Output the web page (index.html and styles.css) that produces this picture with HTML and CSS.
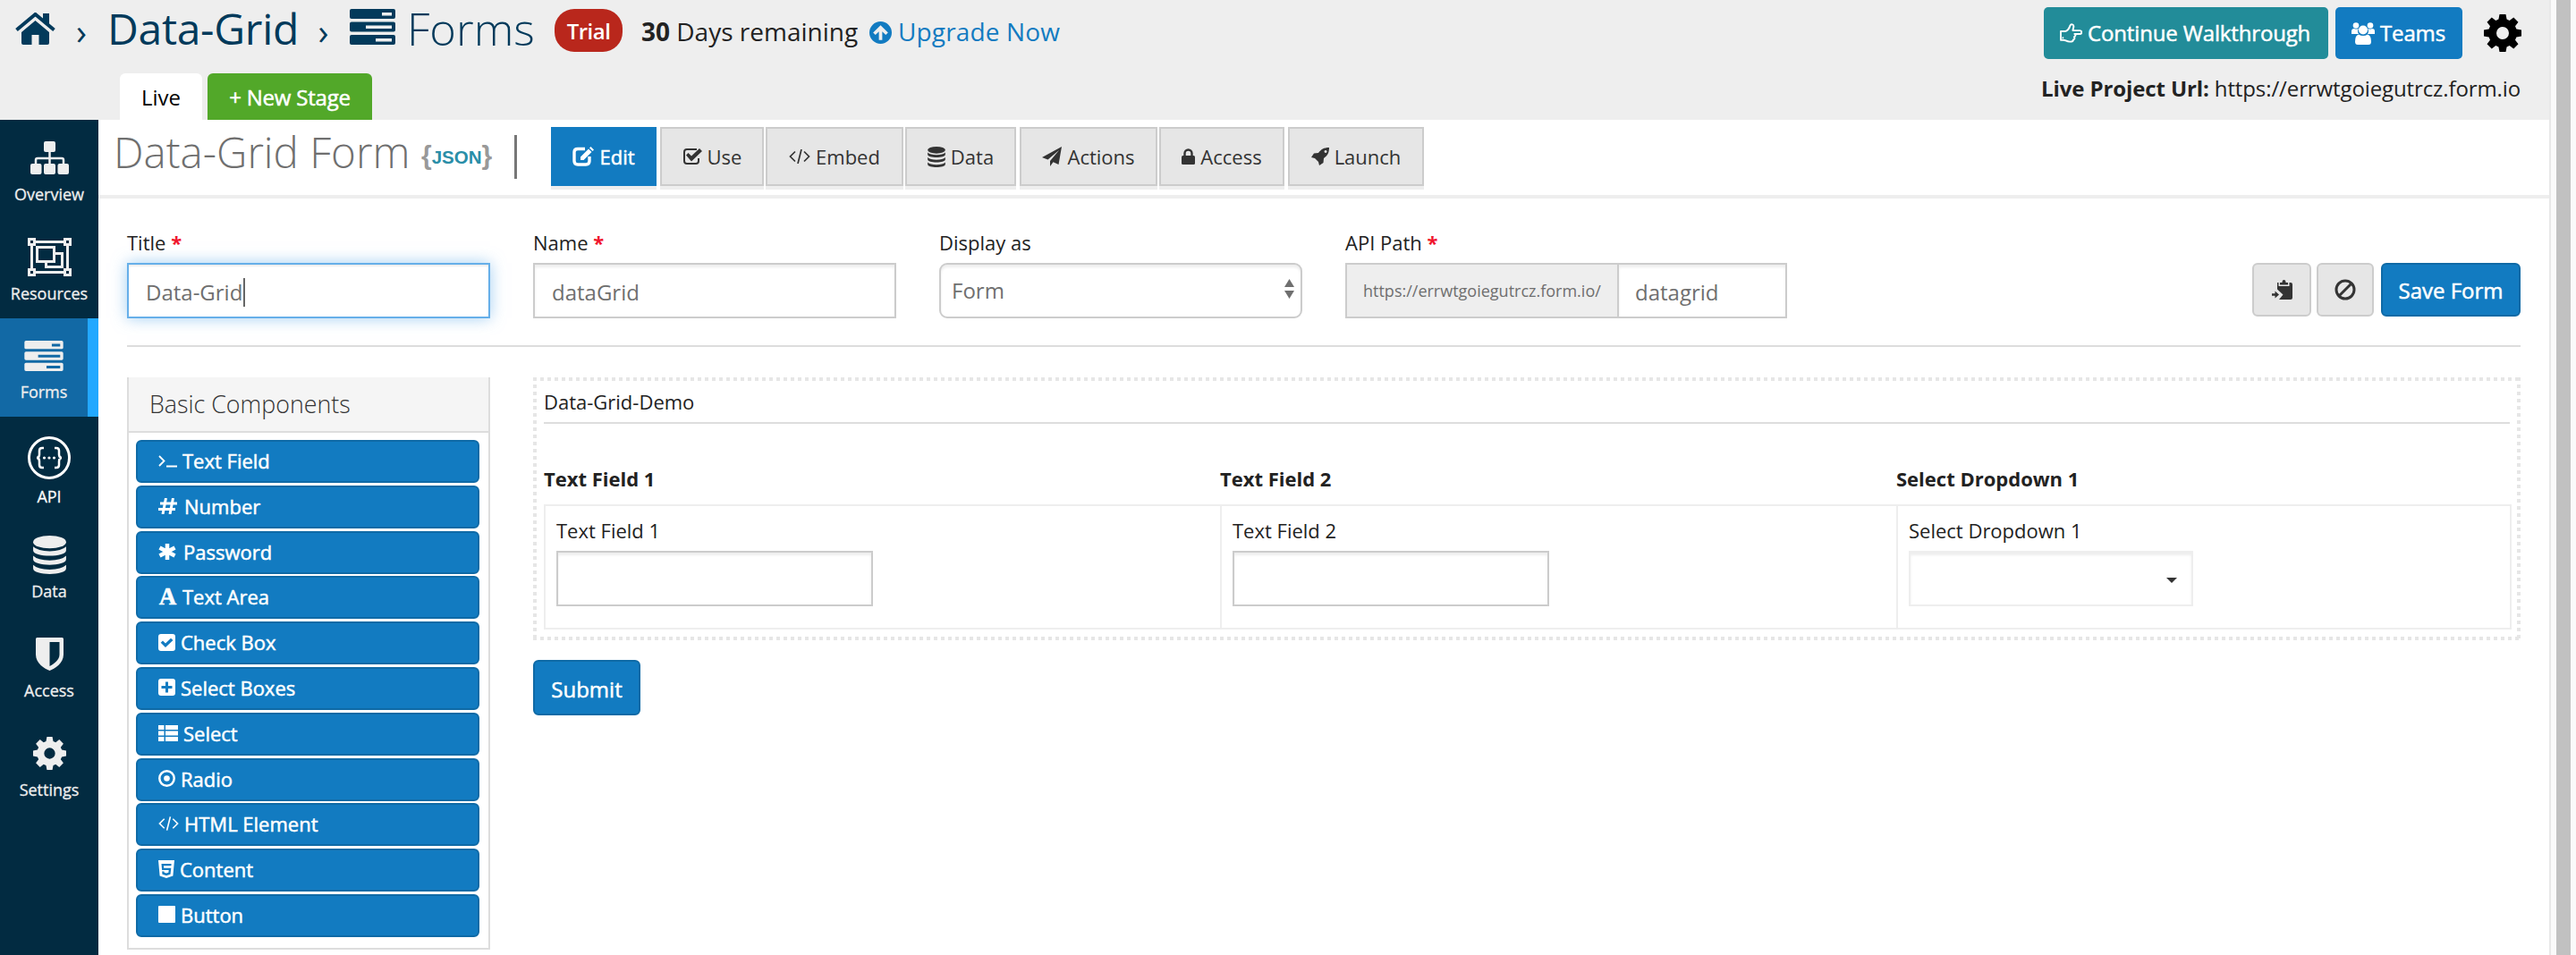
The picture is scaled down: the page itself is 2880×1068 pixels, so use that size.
FILE: index.html
```html
<!DOCTYPE html>
<html lang="en">
<head>
<meta charset="utf-8">
<title>Data-Grid Form</title>
<link rel="stylesheet" href="styles.css">
</head>
<body>
<svg class="sprite" aria-hidden="true">
  <symbol id="home" viewBox="0 0 45 36"><path d="M22.500 9 38 22v12q0 2-2 2H26.500V25h-8v11H9q-2 0-2-2V22z"/><path d="M1.500 19.500 22.500 2 43.500 19.500" fill="none" stroke="currentColor" stroke-width="4"/><path d="M31 1h7v14l-7-6z"/></symbol>
  <symbol id="server" viewBox="0 0 51 40"><path fill-rule="evenodd" d="M2 0h47q2 0 2 2v7q0 2-2 2H2q-2 0-2-2V2q0-2 2-2zm34 4v3.500h11V4zM2 14.500h47q2 0 2 2v7q0 2-2 2H2q-2 0-2-2v-7q0-2 2-2zm16 4V22h29v-3.500zM2 29h47q2 0 2 2v7q0 2-2 2H2q-2 0-2-2v-7q0-2 2-2zm27 4v3.500h18V33z"/></symbol>
  <symbol id="up" viewBox="0 0 24 24"><path fill-rule="evenodd" d="M12 0a12 12 0 1 1 0 24 12 12 0 0 1 0-24zm0 4-8 8 2.500 2.500 3.700-3.700V20h3.600v-9.200l3.700 3.700L20 12z"/></symbol>
  <symbol id="hand" viewBox="0 0 26 22"><g fill="none" stroke="currentColor" stroke-width="2" stroke-linejoin="round"><path d="M1 9h5c4-1 5-4 6-7 1-2 4-1 4 1 0 2-1 4-1 5h8c3 0 3 4 0 4h-6c2 1 1 3-.5 3.500 1 1 .5 3-1 3.200 0 2-2 2.300-4 2.300-4 0-5-2-7.500-2H1z"/></g><circle cx="3.500" cy="16.500" r="1"/></symbol>
  <symbol id="users" viewBox="0 0 26 25"><circle cx="5" cy="3.500" r="3.300"/><circle cx="21" cy="3.500" r="3.300"/><path d="M0 13V10q0-3 3-3 2 1 5 0-2 3 0 6zM26 13V10q0-3-3-3-2 1-5 0 2 3 0 6z"/><circle cx="13" cy="8.500" r="5"/><path d="M8 13.500q5 3 10 0 4 1 4 8 0 3.500-3 3.500H7q-3 0-3-3.500 0-7 4-8z"/></symbol>
  <symbol id="cog" viewBox="-12 -12 24 24"><path fill-rule="evenodd" d="M-2-12H2L2.600-8.800 4.400-8 7-10 10-7 8-4.400 8.800-2.600 12-2V2L8.800 2.600 8 4.400 10 7 7 10 4.400 8 2.600 8.800 2 12H-2L-2.600 8.800-4.400 8-7 10-10 7-8 4.400-8.800 2.600-12 2V-2L-8.800-2.600-8-4.400-10-7-7-10-4.400-8-2.600-8.800zM0-4A4 4 0 1 0 0 4 4 4 0 1 0 0-4z"/></symbol>
  <symbol id="sitemap" viewBox="0 0 43 37"><rect x="15" width="13" height="12" rx="2"/><rect y="25" width="12.500" height="12" rx="2"/><rect x="15" y="25" width="13" height="12" rx="2"/><rect x="30.500" y="25" width="12.500" height="12" rx="2"/><path d="M21.500 10v16M6 26v-5q0-2 2-2h27q2 0 2 2v5" fill="none" stroke="currentColor" stroke-width="2.500"/></symbol>
  <symbol id="group" viewBox="0 0 49 43"><g fill="none" stroke="currentColor" stroke-width="3"><path d="M9 4.500h31M9 38.500h31M4.500 9v25M44.500 9v25"/><path d="M10.500 10.500h19v16h-19zM30 17.500h8.500v15h-18V27"/></g><g fill="none" stroke="currentColor" stroke-width="3"><path d="M1.500 1.500h6v6h-6zM41.500 1.500h6v6h-6zM1.500 35.500h6v6h-6zM41.500 35.500h6v6h-6z"/></g></symbol>
  <symbol id="api" viewBox="0 0 48 48"><circle cx="24" cy="24" r="22.500" fill="none" stroke="currentColor" stroke-width="3"/><path d="M18 13h-2q-3 0-3 3v4q0 4-3 4 3 0 3 4v4q0 3 3 3h2M30 13h2q3 0 3 3v4q0 4 3 4-3 0-3 4v4q0 3-3 3h-2" fill="none" stroke="currentColor" stroke-width="2.500"/><circle cx="18.500" cy="24" r="1.600"/><circle cx="24" cy="24" r="1.600"/><circle cx="29.500" cy="24" r="1.600"/></symbol>
  <symbol id="db" viewBox="0 0 36 42"><ellipse cx="18" cy="7" rx="18" ry="7"/><path d="M0 12q5 5 18 5t18-5v4c0 8-36 8-36 0zM0 22q5 5 18 5t18-5v4c0 8-36 8-36 0zM0 32q5 5 18 5t18-5v4c0 8-36 8-36 0z"/></symbol>
  <symbol id="shield" viewBox="0 0 31 37"><path fill-rule="evenodd" d="M1.500 0h28Q31 0 31 1.500V19c0 10-10 16-15.500 18C10 35 0 29 0 19V1.500Q0 0 1.500 0zm14 5v27c5-2.500 11-7 11-13V5z"/></symbol>
  <symbol id="edit" viewBox="0 0 24 22"><path d="M14 2.500H6Q2 2.500 2 6v10q0 4 4 4h9q4 0 4-4v-5" fill="none" stroke="currentColor" stroke-width="3.400"/><path d="M9 15v-3.500L18 2.500 21.500 6l-9 9zM19 1.500 20.500 0 24 3.500 22.500 5z"/></symbol>
  <symbol id="checkbox" viewBox="0 0 22 20"><path d="M16 2H5Q2 2 2 5v10q0 3 3 3h10q3 0 3-3v-3" fill="none" stroke="currentColor" stroke-width="2"/><path d="M4 8.500 6.500 6l3.500 3.500L19 1l3 3-12 11.500z"/></symbol>
  <symbol id="code" viewBox="0 0 24 16"><path d="M7 2.500 1.500 8 7 13.500M17 2.500 22.500 8 17 13.500M14 0l-4 16" fill="none" stroke="currentColor" stroke-width="1.700"/></symbol>
  <symbol id="plane" viewBox="0 0 22 22"><path d="M22 0 18.500 20l-6-2.700L9 22v-6L19 4 6.500 14.500 0 12z"/></symbol>
  <symbol id="lock" viewBox="0 0 15 18"><path d="M3.500 9V5.500a4 4 0 0 1 8 0V9" fill="none" stroke="currentColor" stroke-width="2.400"/><rect y="8" width="15" height="10" rx="1.500"/></symbol>
  <symbol id="rocket" viewBox="0 0 20 20"><path fill-rule="evenodd" d="M20 0c0 6-2 9-6 12l-.5 5L9 20l-1-4-4-4-4-1 3-4.500 5-.5c3-4 6-6 12-6zm-4 3a1.500 1.500 0 1 0 .1 0z"/></symbol>
  <symbol id="paste" viewBox="0 0 23 22"><path d="M6 3h1.500v4h12V3H21q2 0 2 2v15q0 2-2 2H8l4.500-5.500L6 10.500z"/><path d="M9 5.500V3h2.500q0-3 2-3t2 3H18v2.500z"/><path d="M0 15.300h3.500V12.500L8 16.500l-4.500 4v-2.800H0z"/></symbol>
  <symbol id="ban" viewBox="0 0 24 24"><path d="M12 2a10 10 0 1 1 0 20 10 10 0 0 1 0-20zM5 19 19 5" fill="none" stroke="currentColor" stroke-width="3"/></symbol>
  <symbol id="terminal" viewBox="0 0 21 18"><path d="M1 4l5.500 5.500L1 15M9 15.500h12" fill="none" stroke="currentColor" stroke-width="1.800"/></symbol>
  <symbol id="hash" viewBox="0 0 21 18"><path d="M8.500 0 5 18M16.500 0 13 18M2 6h19M0 12.500h19" fill="none" stroke="currentColor" stroke-width="3"/></symbol>
  <symbol id="star" viewBox="0 0 19 18"><path d="M9.500 0v18M1 4.500l17 9M18 4.500l-17 9" fill="none" stroke="currentColor" stroke-width="4.500"/></symbol>
  <symbol id="check-sq" viewBox="0 0 19 19"><path fill-rule="evenodd" d="M3 0h13q3 0 3 3v13q0 3-3 3H3q-3 0-3-3V3q0-3 3-3zm5 15 8.500-8L14 4.700l-6 5.800-3-3L2.700 9.800z"/></symbol>
  <symbol id="plus-sq" viewBox="0 0 19 19"><path fill-rule="evenodd" d="M3 0h13q3 0 3 3v13q0 3-3 3H3q-3 0-3-3V3q0-3 3-3zm5 3.500V8H3.500v3H8v4.500h3V11h4.500V8H11V3.500z"/></symbol>
  <symbol id="list" viewBox="0 0 22 18"><path d="M0 0h6.500v5H0zM8 0h14v5H8zM0 6.500h6.500v5H0zM8 6.500h14v5H8zM0 13h6.500v5H0zM8 13h14v5H8z"/></symbol>
  <symbol id="dot" viewBox="0 0 19 19"><circle cx="9.500" cy="9.500" r="8.200" fill="none" stroke="currentColor" stroke-width="2.500"/><circle cx="9.500" cy="9.500" r="3.300"/></symbol>
  <symbol id="html5" viewBox="0 0 18 20"><path fill-rule="evenodd" d="M0 0h18l-1.600 17.500L9 20l-7.400-2.500zM3.500 4l.6 7h7.600l-.3 2.800-2.400.8-2.400-.8-.1-1.300H4.200l.3 3.200L9 17.200l4.500-1.500.8-7H6.200L6 6.300h8.400l.2-2.300z"/></symbol>
</svg>

<div class="page">
  <header class="header">
    <div class="header-left">
      <nav class="crumbs">
        <svg class="i-home"><use href="#home"/></svg>
        <span class="chev">›</span>
        <a class="crumb-project">Data-Grid</a>
        <span class="chev">›</span>
        <svg class="i-server"><use href="#server"/></svg>
        <a class="crumb-forms">Forms</a>
        <span class="trial">Trial</span>
        <span class="remaining"><b>30</b> Days remaining</span>
        <svg class="i-up"><use href="#up"/></svg>
        <a class="upgrade">Upgrade Now</a>
      </nav>
      <div class="stages"><span class="stage">Live</span><span class="stage stage-new">+ New Stage</span></div>
    </div>
    <div class="header-right">
      <div class="header-actions">
        <a class="hbtn hbtn-walk"><svg class="i-hand"><use href="#hand"/></svg>Continue Walkthrough</a>
        <a class="hbtn hbtn-teams"><svg class="i-users"><use href="#users"/></svg>Teams</a>
        <svg class="i-gear"><use href="#cog"/></svg>
      </div>
      <div class="project-url"><b>Live Project Url:</b> https://errwtgoiegutrcz.form.io</div>
    </div>
  </header>

  <div class="body">
    <nav class="sidebar">
      <a class="side"><svg style="width:43px;height:37px"><use href="#sitemap"/></svg><span>Overview</span></a>
      <a class="side"><svg style="width:49px;height:43px"><use href="#group"/></svg><span>Resources</span></a>
      <a class="side side-active"><svg style="width:44px;height:34px"><use href="#server"/></svg><span>Forms</span></a>
      <a class="side side-api"><svg style="width:48px;height:48px"><use href="#api"/></svg><span>API</span></a>
      <a class="side side-data"><svg style="width:37px;height:43px"><use href="#db"/></svg><span>Data</span></a>
      <a class="side"><svg style="width:31px;height:37px"><use href="#shield"/></svg><span>Access</span></a>
      <a class="side"><svg style="width:37px;height:37px"><use href="#cog"/></svg><span>Settings</span></a>
    </nav>

    <main class="main">
      <div class="titlebar">
        <h1 class="form-title">Data-Grid Form</h1>
        <span class="json"><i>{</i>JSON<i>}</i></span>
        <span class="divider"></span>
        <div class="tabs">
          <a class="tab tab-edit"><svg style="width:24px;height:22px"><use href="#edit"/></svg>Edit</a>
          <a class="tab tab-use"><svg style="width:22px;height:20px"><use href="#checkbox"/></svg>Use</a>
          <a class="tab tab-embed"><svg style="width:24px;height:16px"><use href="#code"/></svg>Embed</a>
          <a class="tab tab-data"><svg style="width:20px;height:23px"><use href="#db"/></svg>Data</a>
          <a class="tab tab-actions"><svg style="width:22px;height:22px"><use href="#plane"/></svg>Actions</a>
          <a class="tab tab-access"><svg style="width:15px;height:18px"><use href="#lock"/></svg>Access</a>
          <a class="tab tab-launch"><svg style="width:20px;height:20px"><use href="#rocket"/></svg>Launch</a>
        </div>
      </div>

      <div class="content">
        <div class="settings">
          <div class="field"><label>Title <em>*</em></label><div class="input input-focus">Data-Grid<span class="caret"></span></div></div>
          <div class="field"><label>Name <em>*</em></label><div class="input">dataGrid</div></div>
          <div class="field"><label>Display as</label><div class="input select">Form<svg class="i-updown" viewBox="0 0 11 22"><path d="M5.500 0 11 9H0zM5.500 22 0 13h11z"/></svg></div></div>
          <div class="field field-path"><label>API Path <em>*</em></label><div class="path"><span class="addon">https://errwtgoiegutrcz.form.io/</span><div class="input">datagrid</div></div></div>
          <div class="form-actions">
            <a class="btn btn-icon"><svg style="width:23px;height:22px"><use href="#paste"/></svg></a>
            <a class="btn btn-icon btn-ban"><svg style="width:24px;height:24px"><use href="#ban"/></svg></a>
            <a class="btn btn-save">Save Form</a>
          </div>
        </div>

        <div class="builder">
          <section class="panel">
            <h2>Basic Components</h2>
            <div class="components">
              <a class="comp"><svg style="width:21px;height:18px"><use href="#terminal"/></svg>Text Field</a>
              <a class="comp comp-wide"><svg style="width:21px;height:18px"><use href="#hash"/></svg>Number</a>
              <a class="comp comp-wide"><svg style="width:20px;height:18px"><use href="#star"/></svg>Password</a>
              <a class="comp"><span class="letter">A</span>Text Area</a>
              <a class="comp"><svg style="width:19px;height:19px"><use href="#check-sq"/></svg>Check Box</a>
              <a class="comp"><svg style="width:19px;height:19px"><use href="#plus-sq"/></svg>Select Boxes</a>
              <a class="comp"><svg style="width:22px;height:18px"><use href="#list"/></svg>Select</a>
              <a class="comp"><svg style="width:19px;height:19px"><use href="#dot"/></svg>Radio</a>
              <a class="comp"><svg style="width:23px;height:16px"><use href="#code"/></svg>HTML Element</a>
              <a class="comp"><svg style="width:18px;height:20px"><use href="#html5"/></svg>Content</a>
              <a class="comp"><span class="square"></span>Button</a>
            </div>
          </section>

          <section class="preview">
            <div class="dropzone">
              <div class="legend">Data-Grid-Demo</div>
              <div class="grid-row grid-head"><b>Text Field 1</b><b>Text Field 2</b><b>Select Dropdown 1</b></div>
              <div class="grid-row grid-cells">
                <div class="cell"><label>Text Field 1</label><div class="input"></div></div>
                <div class="cell"><label>Text Field 2</label><div class="input"></div></div>
                <div class="cell"><label>Select Dropdown 1</label><div class="input dropdown"><span class="arrow"></span></div></div>
              </div>
            </div>
            <a class="btn btn-submit">Submit</a>
          </section>
        </div>
      </div>
    </main>
  </div>
</div>
<div class="scroll"><div class="thumb"></div></div>
</body>
</html>
```
FILE: styles.css
```css
* { box-sizing: border-box; }

body {
  margin: 0;
  width: 2880px;
  height: 1068px;
  overflow: hidden;
  display: flex;
  background: #fff;
  color: #222;
  font-family: "Open Sans", "Liberation Sans", sans-serif;
  font-size: 22px;
  line-height: 30px;
}

.sprite { position: absolute; width: 0; height: 0; }
svg { display: block; fill: currentColor; flex: none; }

.page { width: 2850px; height: 1068px; display: flex; flex-direction: column; }
.scroll { width: 30px; border-left: 2px solid #e8e8e8; background: #fafafa; padding-left: 6px; }
.thumb { width: 16px; height: 100%; background: #c1c1c1; }

/* Header */
.header {
  height: 134px;
  flex: none;
  display: flex;
  justify-content: space-between;
  background: #eee;
  padding-right: 32px;
}
.crumbs { height: 64px; padding-left: 17px; display: flex; align-items: center; color: #023a5b; white-space: nowrap; }
.i-home { width: 45px; height: 36px; }
.chev { width: 58px; text-align: center; font-size: 40px; line-height: 64px; padding-top: 6px; }
.crumb-project { width: 212px; font-size: 48px; line-height: 64px; letter-spacing: -0.3px; }
.crumb-project + .chev { width: 59px; }
.i-server { width: 51px; height: 40px; margin-top: -4px; }
.crumb-forms { width: 178px; padding-left: 13px; font-size: 50.5px; line-height: 62px; font-weight: 300; }
.trial {
  width: 76px;
  height: 48px;
  margin: 10px 21px 0 0;
  border-radius: 22px;
  background: #b9271c;
  color: #fff;
  font-size: 24px;
  font-weight: 600;
  line-height: 50px;
  letter-spacing: -0.5px;
  text-align: center;
  align-self: flex-start;
}
.remaining { width: 255px; font-size: 28px; line-height: 64px; padding-top: 6px; color: #222; }
.i-up { width: 25px; height: 25px; color: #127bc1; margin-top: 8px; }
.upgrade { padding: 6px 0 0 7px; font-size: 28px; line-height: 64px; letter-spacing: 0.15px; color: #127bc1; }

.stages { display: flex; gap: 6px; padding: 18px 0 0 134px; }
.stage { width: 92px; height: 52px; border-radius: 6px 6px 0 0; background: #fff; color: #000; font-size: 24px; line-height: 54px; text-align: center; }
.stage-new { width: 184px; background: #52a829; color: #fff; letter-spacing: -0.2px; -webkit-text-stroke: 0.5px #fff; }

.header-right { display: flex; flex-direction: column; align-items: flex-end; padding-top: 8px; }
.header-actions { display: flex; align-items: center; gap: 8px; }
.hbtn { height: 58px; border-radius: 5px; display: flex; align-items: center; color: #fff; font-size: 24px; padding-left: 18px; gap: 6px; letter-spacing: -0.15px; -webkit-text-stroke: 0.5px #fff; white-space: nowrap; }
.hbtn-walk { width: 318px; background: #228c99; }
.hbtn-teams { width: 142px; background: #127bc1; }
.i-hand { width: 25px; height: 22px; }
.i-users { width: 26px; height: 25px; }
.i-gear { width: 42px; height: 42px; margin: 0 -1px 0 16px; color: #000; }
.project-url { font-size: 24px; line-height: 32px; margin-top: 17px; letter-spacing: -0.11px; }

/* Sidebar */
.body { display: flex; flex: 1; min-height: 0; }
.sidebar { width: 110px; background: #022b41; color: #eee; }
.side { height: 111px; display: flex; flex-direction: column; align-items: center; justify-content: flex-end; font-size: 18px; -webkit-text-stroke: 0.3px #eee; padding: 14px 0 16px; }
.side svg { margin: auto; }
.side span { line-height: 24px; }
.side-active { background: #1269a5; border-right: 12px solid #22a8ff; height: 110px; }
.side-api { height: 117px; color: #fff; }
.side-data { height: 106px; padding-top: 9px; }

/* Title bar */
.main { flex: 1; min-width: 0; }
.titlebar { height: 88px; border-bottom: 4px solid #eee; display: flex; align-items: flex-start; padding-left: 17px; }
.form-title { margin: 0; width: 344px; font-size: 47.5px; line-height: 64px; padding: 4px 0 0 0; font-weight: 300; color: #6f6f6f; white-space: nowrap; }
.json { width: 104px; height: 30px; margin-top: 27px; display: flex; align-items: center; font: bold 20.5px/30px "Liberation Sans", sans-serif; color: #2a8ea8; }
.json i { font: bold 30px/26px "Liberation Sans", sans-serif; color: #999; margin-top: -4px; }
.divider { width: 3px; height: 49px; margin-top: 17px; background: #777; }
.tabs { display: flex; padding: 8px 0 0 38px; }
.tab { height: 66px; border: 2px solid #ccc; box-shadow: 0 4px 0 #eee; background: #e6e6e6; color: #333; display: flex; align-items: center; justify-content: center; gap: 6px; margin-right: 2px; }
.tab-edit { width: 118px; background: #127bc1; border-color: #127bc1; color: #fff; margin-right: 4px; -webkit-text-stroke: 0.5px #fff; }
.tab-use { width: 116px; }
.tab-embed { width: 154px; }
.tab-data { width: 124px; margin-right: 4px; }
.tab-actions { width: 154px; }
.tab-access { width: 140px; margin-right: 4px; }
.tab-launch { width: 152px; }

/* Form settings */
.content { padding: 34px 32px 0; }
.settings { display: flex; gap: 48px; height: 132px; border-bottom: 2px solid #ddd; }
.field { width: 406px; }
.field label { display: block; height: 38px; line-height: 30px; }
.field em { color: #f0142d; font-style: normal; font-weight: bold; }
.input { height: 62px; border: 2px solid #ccc; background: #fff; box-shadow: inset 0 3px 3px rgba(0,0,0,.07); padding: 3px 0 0 19px; display: flex; align-items: center; font-size: 24px; color: #6f6f6f; }
.input-focus { border-color: #66afe9; box-shadow: inset 0 2px 2px rgba(0,0,0,.07), 0 0 16px rgba(102,175,233,.6); }
.caret { width: 2px; height: 32px; background: #666; margin-left: 1px; }
.select { border-radius: 9px; padding: 0 7px 0 12px; justify-content: space-between; }
.i-updown { width: 11px; height: 22px; margin-top: -5px; }
.field-path { width: 494px; }
.path { display: flex; }
.addon { width: 304px; height: 62px; border: 2px solid #ccc; border-right: 0; background: #eee; color: #6f6f6f; font-size: 18px; line-height: 58px; padding-left: 18px; }
.path .input { width: 190px; padding-left: 18px; }
.form-actions { margin-left: auto; padding-top: 38px; display: flex; }

.btn { display: flex; align-items: center; justify-content: center; height: 60px; border: 2px solid #0f6aa6; border-radius: 6px; background: #127bc1; color: #fff; font-size: 24px; -webkit-text-stroke: 0.5px #fff; }
.btn-icon { width: 66px; background: #e6e6e6; border-color: #ccc; color: #333; margin-right: 6px; }
.btn-ban { width: 64px; margin-right: 8px; }
.btn-save { width: 156px; padding-top: 2px; }
.btn-submit { width: 120px; height: 62px; margin-top: 22px; padding-top: 3px; }

/* Builder */
.builder { display: flex; gap: 48px; padding-top: 34px; }
.panel { width: 406px; height: 640px; border: 2px solid #ddd; border-top: 0; }
.panel h2 { margin: 0; height: 62px; padding-left: 23px; background: #f5f5f5; border-bottom: 2px solid #ddd; color: #333; font-size: 26.8px; line-height: 60px; font-weight: 300; }
.components { padding: 8px 10px 0 8px; }
.comp { height: 48px; margin-bottom: 2.8px; padding: 0 0 2px 23px; border: 2px solid #0f6aa6; border-radius: 6px; background: #127bc1; color: #fff; display: flex; align-items: center; gap: 6px; -webkit-text-stroke: 0.5px #fff; }
.comp-wide { gap: 8px; }
.letter { width: 21px; font: bold 27px/30px "Liberation Serif", serif; text-align: center; }
.square { width: 19px; height: 19px; border-radius: 1px; background: #fff; }

/* Preview: square 4px dots every 8px round the drop zone */
.preview { width: 2222px; }
.dropzone {
  height: 294px;
  padding: 10px 10px 0 12px;
  background:
    repeating-linear-gradient(90deg, #e6e6e6 0 4px, transparent 4px 8px) top / 100% 4px no-repeat,
    repeating-linear-gradient(90deg, #e6e6e6 0 4px, transparent 4px 8px) bottom / 100% 4px no-repeat,
    repeating-linear-gradient(#e6e6e6 0 4px, transparent 4px 8px) left / 4px 100% no-repeat,
    repeating-linear-gradient(#e6e6e6 0 4px, transparent 4px 8px) right / 4px 100% no-repeat;
}
.legend { height: 42px; margin-right: 2px; border-bottom: 2px solid #ddd; line-height: 34px; }
.grid-row { display: grid; grid-template-columns: 756px 756px 1fr; }
.grid-head { height: 90px; padding-top: 46px; }
.grid-cells { height: 140px; border: 2px solid #eee; border-left: 0; }
.cell { border-left: 2px solid #eee; padding: 10px 12px 0; }
.cell label { display: block; height: 40px; line-height: 35px; }
.cell .input { width: 354px; }
.cell .dropdown { width: 318px; border-color: #eee; justify-content: flex-end; padding-right: 16px; }
.arrow { border: 6px solid transparent; border-top: 6px solid #333; border-bottom: 0; }
```
